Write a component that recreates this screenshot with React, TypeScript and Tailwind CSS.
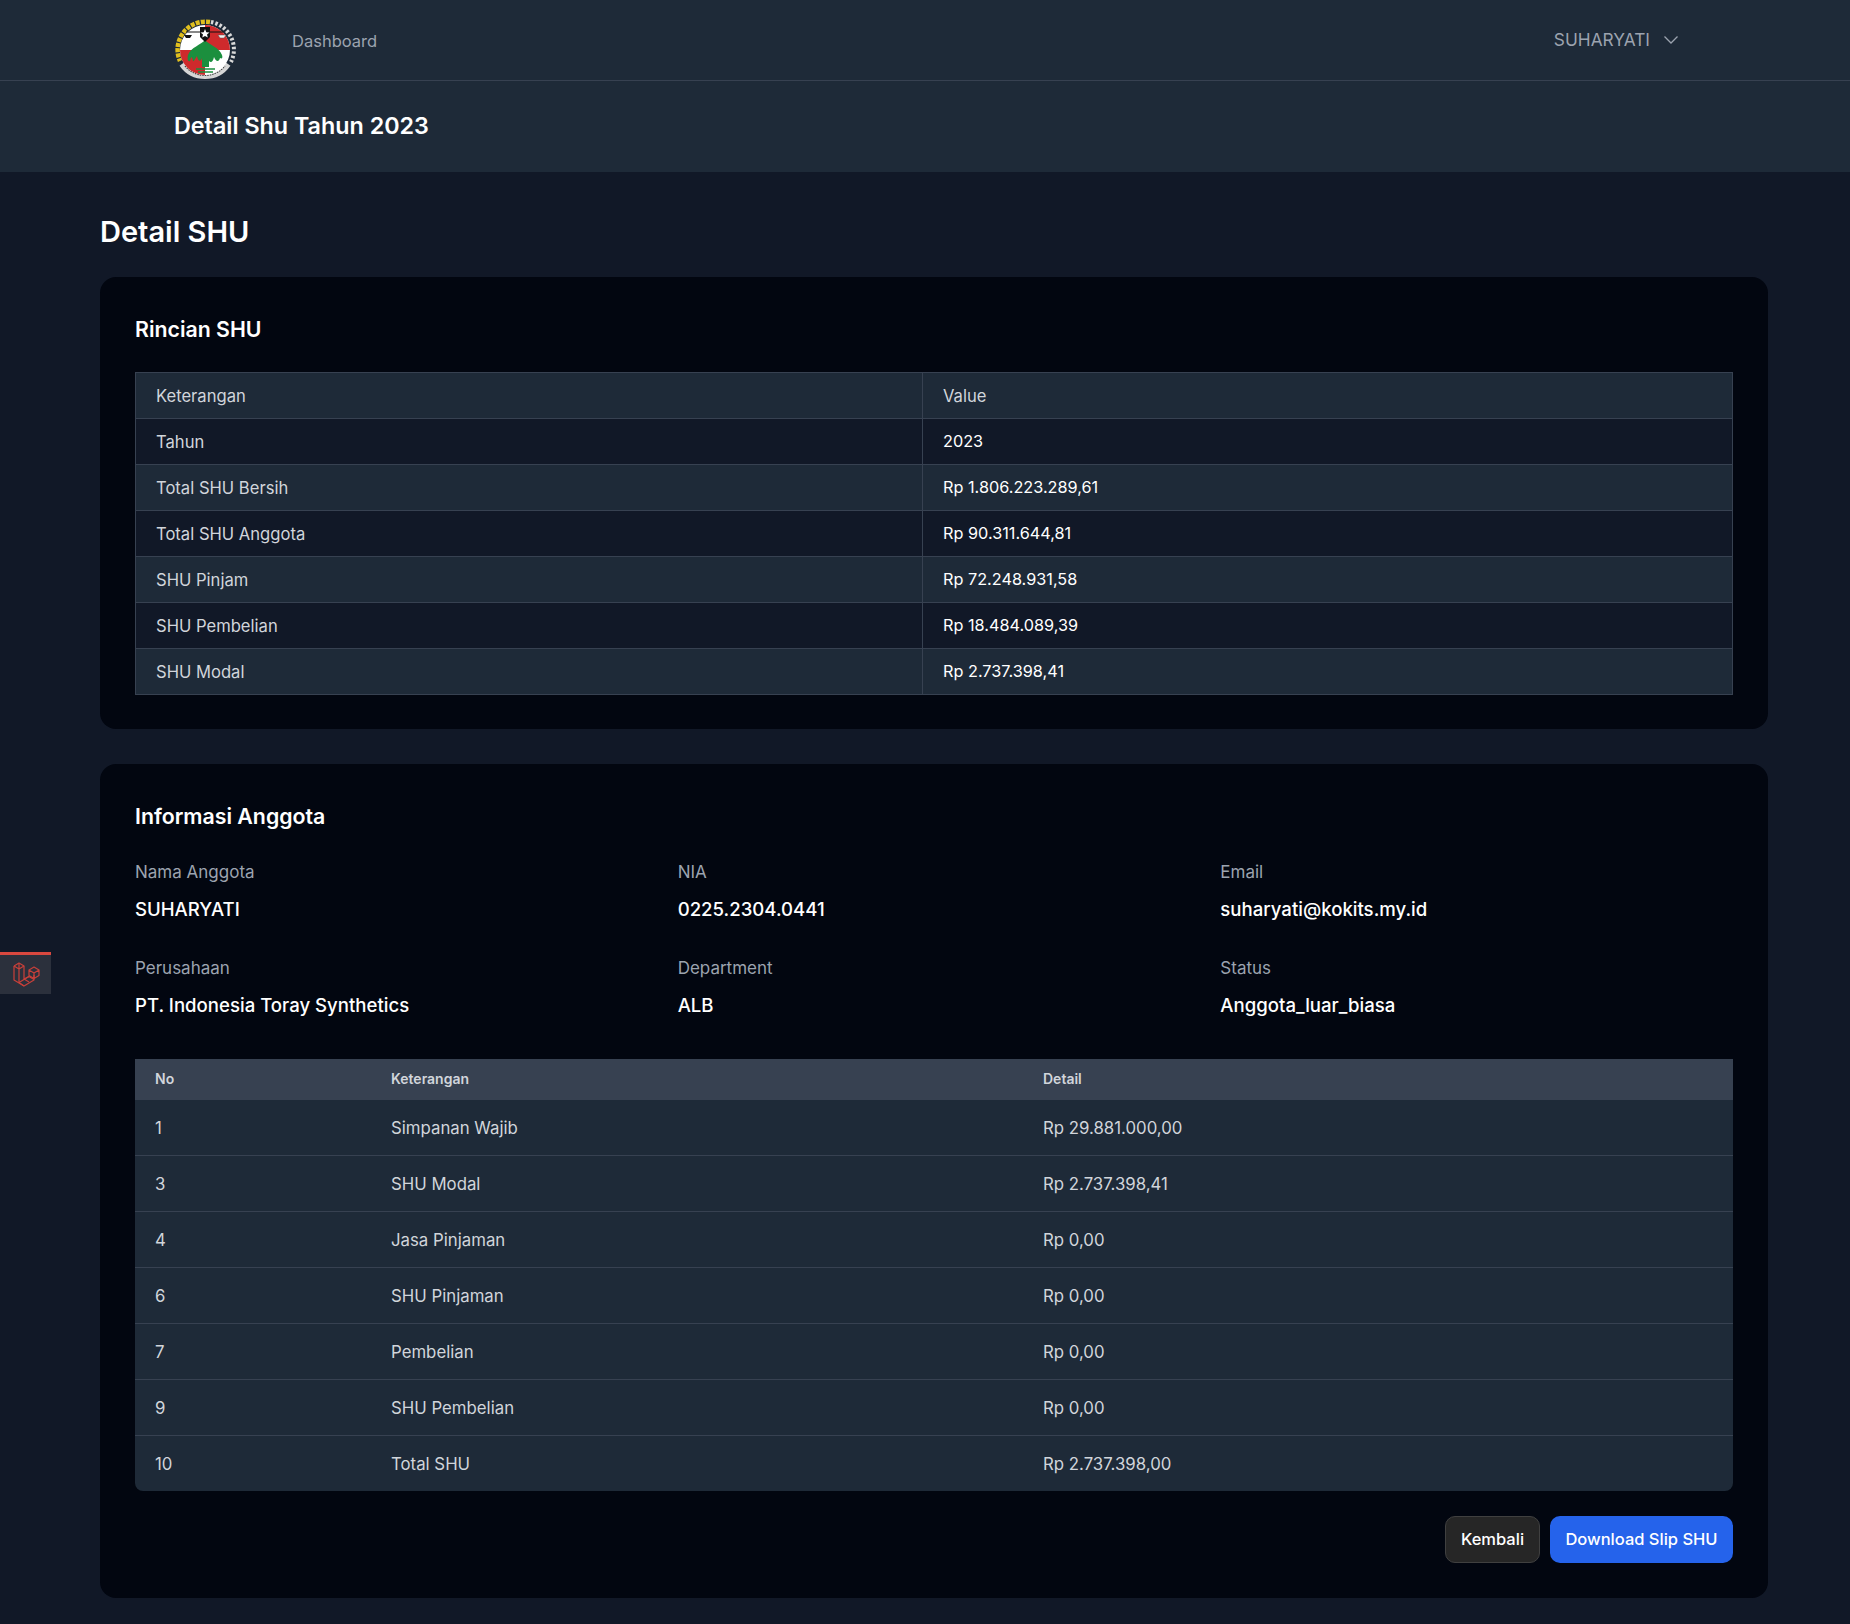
const rincian = [
    ['Keterangan', 'Value'],
    ['Tahun', '2023'],
    ['Total SHU Bersih', 'Rp 1.806.223.289,61'],
    ['Total SHU Anggota', 'Rp 90.311.644,81'],
    ['SHU Pinjam', 'Rp 72.248.931,58'],
    ['SHU Pembelian', 'Rp 18.484.089,39'],
    ['SHU Modal', 'Rp 2.737.398,41'],
];

const info = [
    ['Nama Anggota', 'SUHARYATI'],
    ['NIA', '0225.2304.0441'],
    ['Email', 'suharyati@kokits.my.id'],
    ['Perusahaan', 'PT. Indonesia Toray Synthetics'],
    ['Department', 'ALB'],
    ['Status', 'Anggota_luar_biasa'],
];

const detail = [
    ['1', 'Simpanan Wajib', 'Rp 29.881.000,00'],
    ['3', 'SHU Modal', 'Rp 2.737.398,41'],
    ['4', 'Jasa Pinjaman', 'Rp 0,00'],
    ['6', 'SHU Pinjaman', 'Rp 0,00'],
    ['7', 'Pembelian', 'Rp 0,00'],
    ['9', 'SHU Pembelian', 'Rp 0,00'],
    ['10', 'Total SHU', 'Rp 2.737.398,00'],
];

function Logo() {
    return (
        <svg viewBox="0 0 64 64" className="w-[64px] h-[64px]">
            {/* outer ring: gold cog on the left, white leaves on the right, ribbon at the bottom */}
            <path d="M36 5 A28 28 0 0 0 6 44" fill="none" stroke="#e0bf1e" strokeWidth="4.5" strokeDasharray="4 1.2" />
            <path d="M37 5 A28 28 0 0 1 57 45" fill="none" stroke="#d9d9d9" strokeWidth="4" strokeDasharray="2.5 2" />
            <path d="M8 47 A28 28 0 0 0 54 47" fill="none" stroke="#d6d6d6" strokeWidth="6" />
            <path d="M11 49 A26 26 0 0 0 51 49" fill="none" stroke="#444444" strokeWidth="1.2" strokeDasharray="1.5 1" />
            <circle cx="31" cy="33" r="25" fill="#ffffff" />
            <path d="M31 8 A25 25 0 0 1 56 33 H31 Z" fill="#cf2a2c" />
            <path d="M6 33 A25 25 0 0 0 31 58 V33 Z" fill="#cf2a2c" />
            <path d="M31 23 C27 28 17 30 14 38 C13 42 14 45 16 44 C17 39 18 39 19 44 C20 45 22 40 23 39 C24 45 27 45 28 41 L28 50 L35 50 L35 44 C37 46 39 45 40 40 C42 45 45 45 46 41 C48 42 49 41 48 38 C45 30 35 28 31 23 Z" fill="#1b8f3e" />
            <path d="M22 52 H41 M24 55 H39" stroke="#1b8f3e" strokeWidth="1.6" />
            <path d="M26 10 H36 V20 L31 25 L26 20 Z" fill="#111111" />
            <path d="M31 12 L32.3 15.2 L35.5 15.5 L33 17.6 L33.8 20.6 L31 19 L28.2 20.6 L29 17.6 L26.5 15.5 L29.7 15.2 Z" fill="#ffffff" />
            <path d="M12 15 H26 M36 15 H50" stroke="#111111" strokeWidth="1" />
            <path d="M10 18 H18 L16 21 H12 Z" fill="#111111" />
            <path d="M44 18 H52 L50 21 H46 Z" fill="#f2f2f2" stroke="#555555" strokeWidth="0.5" />
        </svg>
    );
}

function LaravelMark() {
    return (
        <svg viewBox="0 0 28 28" fill="none" stroke="#c8403a" strokeWidth="1.2" strokeLinejoin="round" className="w-[28px] h-[28px] ml-[2px]">
            <path d="M1 5 L6 2 L11 5 V18 L16 15.5" />
            <path d="M1 5 V19 L11 25 L21 19 V14" />
            <path d="M6 2 V8 M1 5 L6 8 L11 5 M6 8 V21.5 L11 25" />
            <path d="M6 21.5 L16 15.5 L21 18.5" />
            <path d="M16 9 L21 6 L26 9 V14.5 L21 17.5 L16 14.5 Z M16 9 L21 12 L26 9 M21 12 V17.5" />
            <path d="M11 18 L16 21" />
        </svg>
    );
}

export default function App() {
    return (
        <div className="relative min-h-[1624px] bg-[#111827] font-['Inter',sans-serif]">
            <nav className="h-[81px] bg-[#1e2a38] border-b border-[#374151] flex items-center">
                <div className="ml-[174px] w-[118px] h-[64px] mt-[17px] relative z-10"><Logo /></div>
                <span className="text-[16.5px] text-[#9ca3af] mt-[2px]">Dashboard</span>
                <div className="ml-auto mr-[172px] flex items-center gap-[14px] text-[17.3px] text-[#9ca3af]">
                    SUHARYATI
                    <svg viewBox="0 0 14 8" fill="none" stroke="currentColor" strokeWidth="1.3" className="w-[14px] h-[8px]">
                        <path d="M0.5 0.5 L7 7 L13.5 0.5" />
                    </svg>
                </div>
            </nav>

            <header className="h-[91px] bg-[#1e2a38] flex items-center pl-[174px]">
                <h2 className="text-[23.3px] font-semibold text-white">Detail Shu Tahun 2023</h2>
            </header>

            <main className="pl-[100px] pr-[82px] pt-[42px]">
                <h1 className="text-[29px] font-semibold text-white leading-[36px]">Detail SHU</h1>

                <section className="mt-[27px] bg-[#020610] rounded-2xl px-[35px] pt-[35px] pb-[34px]">
                    <h3 className="text-[21.3px] leading-[35px] font-semibold text-white">Rincian SHU</h3>
                    <table className="mt-[25px] w-full table-fixed border-collapse">
                        <tbody>
                            {rincian.map((row, i) => (
                                <tr key={row[0]} className={i % 2 === 0 ? 'bg-[#1e2a38]' : 'bg-[#111827]'}>
                                    <td className="w-[787px] h-[46px] px-5 pt-[1px] border border-[#374151] text-[16.6px] text-[#d1d5db]">{row[0]}</td>
                                    <td className={i === 0 ? 'h-[46px] px-5 pt-[1px] border border-[#374151] text-[16.6px] text-[#d1d5db]' : 'h-[46px] px-5 border border-[#374151] text-[16.25px] text-white'}>{row[1]}</td>
                                </tr>
                            ))}
                        </tbody>
                    </table>
                </section>

                <section className="mt-[35px] bg-[#020610] rounded-2xl px-[35px] pt-[35px] pb-[35px]">
                    <h3 className="text-[21.3px] leading-[35px] font-semibold text-white">Informasi Anggota</h3>
                    <div className="mt-[26px] grid grid-cols-3 gap-x-[30px] gap-y-[33px]">
                        {info.map(([label, value]) => (
                            <div key={label}>
                                <div className="text-[17px] leading-[24px] text-[#9ca3af]">{label}</div>
                                <div className="mt-[11px] text-[18.6px] leading-[28px] font-medium text-white">{value}</div>
                            </div>
                        ))}
                    </div>

                    <div className="mt-[40px] rounded-b-lg overflow-hidden">
                        <table className="w-full table-fixed">
                            <thead className="bg-[#374151]">
                                <tr className="text-left text-sm text-[#d1d5db]">
                                    <th className="w-[256px] h-[41px] px-5 pb-[1px] font-semibold">No</th>
                                    <th className="w-[652px] h-[41px] pb-[1px] font-semibold">Keterangan</th>
                                    <th className="h-[41px] pb-[1px] font-semibold">Detail</th>
                                </tr>
                            </thead>
                            <tbody className="bg-[#1e2a38] text-[16.8px]">
                                {detail.map((row, i) => (
                                    <tr key={row[0]} className={i > 0 ? 'h-[56px] border-t border-[#374151]' : 'h-[55px]'}>
                                        <td className="px-5 pt-[3px] text-[#d1d5db]">{row[0]}</td>
                                        <td className="pt-[3px] text-[#d1d5db]">{row[1]}</td>
                                        <td className="pt-[3px] text-[#d1d5db]">{row[2]}</td>
                                    </tr>
                                ))}
                            </tbody>
                        </table>
                    </div>

                    <div className="mt-[25px] flex justify-end gap-[10px]">
                        <button className="w-[95px] h-[47px] rounded-[10px] bg-[#262626] border border-[#404040] text-[16.5px] font-medium text-white">Kembali</button>
                        <button className="w-[183px] h-[47px] rounded-[10px] bg-[#2563eb] text-[16.5px] font-medium text-white">Download Slip SHU</button>
                    </div>
                </section>
            </main>

            <div className="absolute left-0 top-[952px] w-[51px] h-[42px] bg-[#2b303c] border-t-[3px] border-[#d9483f] flex items-center justify-center">
                <LaravelMark />
            </div>
        </div>
    );
}
